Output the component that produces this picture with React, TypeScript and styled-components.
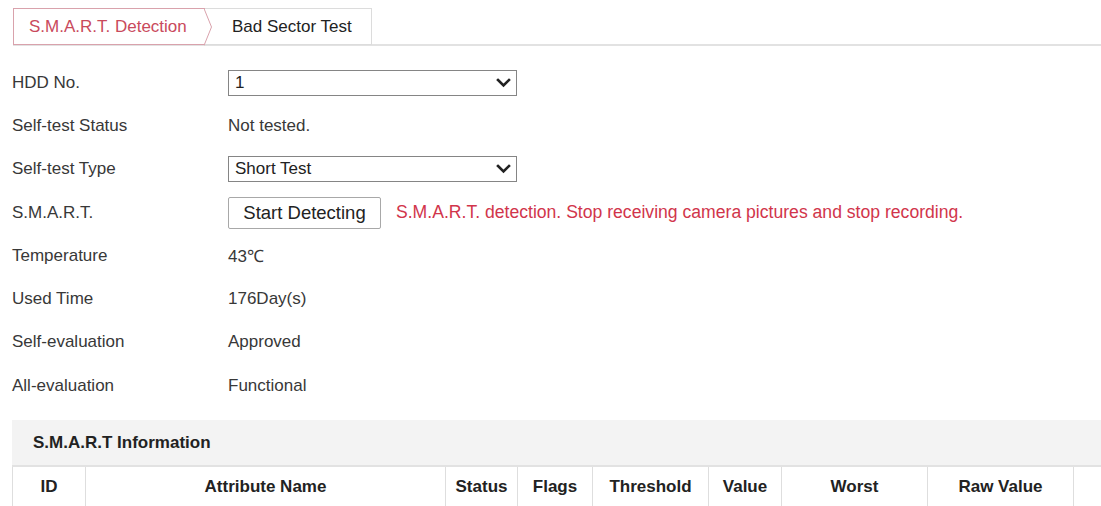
import React from 'react';
import styled, { createGlobalStyle } from 'styled-components';

const GlobalStyle = createGlobalStyle`
    html, body {
        margin: 0;
        padding: 0;
        background: #fff;
        overflow: hidden;
    }
    body {
        font-family: "Liberation Sans", Arial, sans-serif;
        font-size: 17px;
        color: #383838;
    }
`;

const fields = [
    { label: 'HDD No.', kind: 'select', value: '1' },
    { label: 'Self-test Status', kind: 'text', value: 'Not tested.' },
    { label: 'Self-test Type', kind: 'select', value: 'Short Test' },
    { label: 'S.M.A.R.T.', kind: 'button', value: 'Start Detecting' },
    { label: 'Temperature', kind: 'text', value: '43℃' },
    { label: 'Used Time', kind: 'text', value: '176Day(s)' },
    { label: 'Self-evaluation', kind: 'text', value: 'Approved' },
    { label: 'All-evaluation', kind: 'text', value: 'Functional' },
];

const columns = [
    { name: 'ID', width: 73 },
    { name: 'Attribute Name', width: 360 },
    { name: 'Status', width: 72 },
    { name: 'Flags', width: 75 },
    { name: 'Threshold', width: 116 },
    { name: 'Value', width: 73 },
    { name: 'Worst', width: 146 },
    { name: 'Raw Value', width: 146 },
    { name: '', width: 28 },
];

function Chevron() {
    return (
        <svg width="15" height="10" viewBox="0 0 15 10">
            <path d="M2 2 L7.5 7.5 L13 2" fill="none" stroke="#222" strokeWidth="2.6" strokeLinecap="square" />
        </svg>
    );
}

export default function App() {
    return (
        <Page>
            <GlobalStyle />
            <TabBar>
                <Tab active>
                    S.M.A.R.T. Detection
                    <TabArrow width="9" height="38" viewBox="0 0 9 38">
                        <path d="M0 0.5 L7.5 19 L0 37.5" fill="#fff" stroke="#d9a2ac" strokeWidth="1" />
                    </TabArrow>
                </Tab>
                <Tab>Bad Sector Test</Tab>
            </TabBar>

            <Form>
                {fields.map((f) => (
                    <Row key={f.label}>
                        <Label>{f.label}</Label>
                        {f.kind === 'select' && (
                            <SelectBox>
                                <span>{f.value}</span>
                                <Chevron />
                            </SelectBox>
                        )}
                        {f.kind === 'text' && <Value>{f.value}</Value>}
                        {f.kind === 'button' && (
                            <ActionLine>
                                <Button>{f.value}</Button>
                                <Warning>S.M.A.R.T. detection. Stop receiving camera pictures and stop recording.</Warning>
                            </ActionLine>
                        )}
                    </Row>
                ))}
            </Form>

            <Panel>
                <PanelTitle>S.M.A.R.T Information</PanelTitle>
                <Table>
                    <colgroup>
                        {columns.map((c, i) => (
                            <col key={i} style={{ width: c.width }} />
                        ))}
                    </colgroup>
                    <thead>
                        <tr>
                            {columns.map((c, i) => (
                                <Th key={i}>{c.name}</Th>
                            ))}
                        </tr>
                    </thead>
                </Table>
            </Panel>
        </Page>
    );
};

const Page = styled.div`
    width: 1101px;
    height: 506px;
    padding: 8px 0 0 12px;
    box-sizing: border-box;
`;

const TabBar = styled.div`
    display: flex;
    margin-left: 1px;
    height: 36px;
    border-bottom: 2px solid #e2e2e2;
`;

const Tab = styled.div<{ active?: boolean }>`
    position: relative;
    display: flex;
    align-items: center;
    box-sizing: border-box;
    height: 37px;
    font-size: 17px;
    ${(p) => p.active ? `
        width: 192px;
        padding-left: 15px;
        color: #c94a5c;
        border: 1px solid #d9a2ac;
        border-right: none;
        z-index: 1;
    ` : `
        width: 167px;
        padding-left: 27px;
        color: #222;
        border-top: 1px solid #dcdcdc;
        border-right: 1px solid #dcdcdc;
        border-bottom: 1px solid #dcdcdc;
    `}
`;

const TabArrow = styled.svg`
    position: absolute;
    top: -1px;
    right: -8px;
`;

const Form = styled.div`
    margin-top: 15px;
    display: flex;
    flex-direction: column;
`;

const Row = styled.div`
    display: grid;
    grid-template-columns: 216px 1fr;
    align-items: center;
    height: 43.3px;
`;

const Label = styled.div`
    color: #383838;
`;

const Value = styled.div`
    color: #383838;
`;

const SelectBox = styled.div`
    display: flex;
    align-items: center;
    justify-content: space-between;
    box-sizing: border-box;
    width: 289px;
    height: 26px;
    padding: 0 5px 0 6px;
    border: 1px solid #858585;
    font-size: 17px;
    color: #222;
    background: #fff;
`;

const ActionLine = styled.div`
    display: flex;
    align-items: center;
    gap: 15px;
`;

const Button = styled.button`
    box-sizing: border-box;
    width: 153px;
    height: 32px;
    padding: 0;
    border: 1px solid #a8a8a8;
    border-radius: 2px;
    background: #fff;
    font-family: "Liberation Sans", Arial, sans-serif;
    font-size: 18.5px;
    color: #222;
`;

const Warning = styled.span`
    color: #d1354b;
    font-size: 17.6px;
`;

const Panel = styled.div`
    margin-top: 13px;
    background: #f3f3f3;
`;

const PanelTitle = styled.div`
    display: flex;
    align-items: center;
    height: 45px;
    padding-left: 21px;
    font-weight: bold;
    font-size: 17px;
    color: #222;
`;

const Table = styled.table`
    width: 1089px;
    table-layout: fixed;
    border-collapse: collapse;
    background: #fff;
`;

const Th = styled.th`
    height: 40px;
    padding: 0;
    border: 1px solid #dedede;
    border-top: 2px solid #e2e2e2;
    font-size: 17px;
    font-weight: bold;
    color: #222;
    text-align: center;
    white-space: nowrap;
`;
